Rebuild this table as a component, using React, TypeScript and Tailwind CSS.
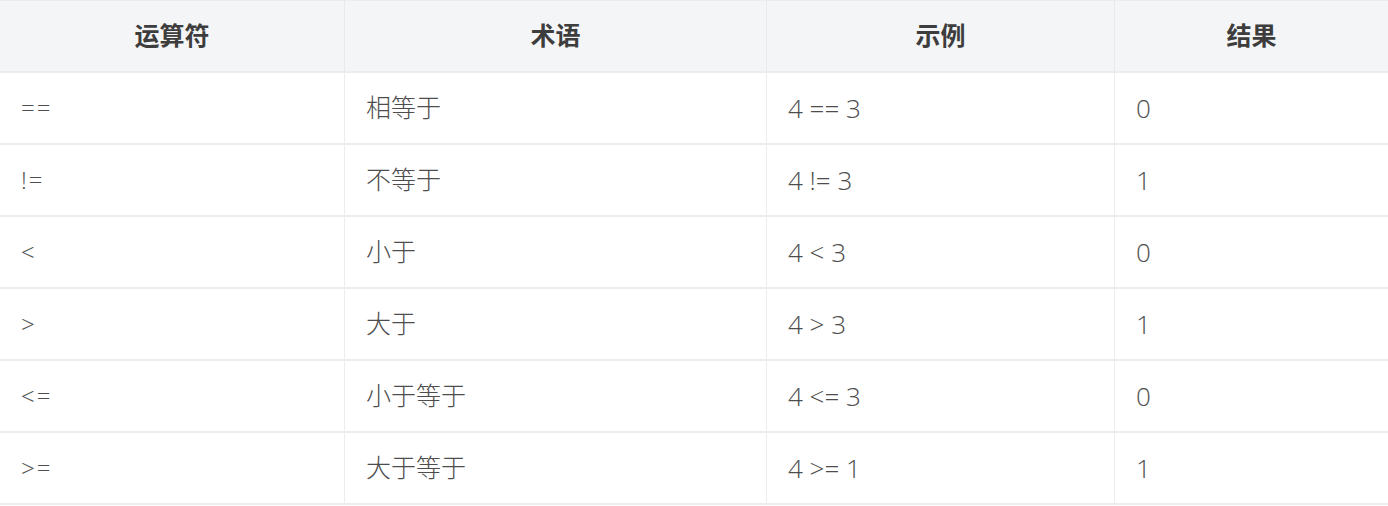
import React from "react";

const rows = [
    ["==", "相等于", "4 == 3", "0"],
    ["!=", "不等于", "4 != 3", "1"],
    ["<", "小于", "4 < 3", "0"],
    [">", "大于", "4 > 3", "1"],
    ["<=", "小于等于", "4 <= 3", "0"],
    [">=", "大于等于", "4 >= 1", "1"],
];

const headers = ["运算符", "术语", "示例", "结果"];

const cols = "grid grid-cols-[345px_422px_348px_1fr]";

// per-column text tweaks: first column is spaced out, term column is CJK
const cellText = [
    "text-[24px] tracking-[2px]",
    "text-[25px]",
    "text-[26px]",
    "text-[26px]",
];

export default function App() {
    return (
        <div
            className="w-[1388px] bg-white border-t border-[#ececec]"
            style={{ fontFamily: '"Open Sans", "Noto Sans CJK SC", sans-serif' }}
        >
            <div className={`${cols} bg-[#f4f5f6] border-b-2 border-[#ececec]`}>
                {headers.map((h, i) => (
                    <div
                        key={h}
                        className={`h-[70px] flex items-center justify-center text-[25px] font-bold text-[#3d3d3d] ${i < 3 ? "border-r border-[#e9e9e9]" : ""}`}
                    >
                        {h}
                    </div>
                ))}
            </div>

            {rows.map((r, idx) => (
                <div key={idx} className={`${cols} border-b-2 border-[#ececec]`}>
                    {r.map((c, i) => (
                        <div
                            key={i}
                            className={`h-[70px] flex items-center pl-[21px] font-light text-[#4d4d4d] whitespace-pre ${cellText[i]} ${i < 3 ? "border-r border-[#ececec]" : ""}`}
                        >
                            {c}
                        </div>
                    ))}
                </div>
            ))}
        </div>
    );
}
